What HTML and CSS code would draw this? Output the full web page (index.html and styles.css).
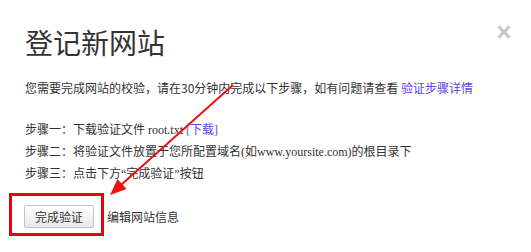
FILE: index.html
```html
<!DOCTYPE html>
<html lang="zh-CN">
<head>
<meta charset="utf-8">
<title>登记新网站</title>
<link rel="stylesheet" href="styles.css">
</head>
<body>
<div class="dialog">
  <h1 class="title">登记新网站</h1>
  <span class="close" aria-label="关闭">
    <svg width="14" height="14" viewBox="0 0 14 14"><path d="M1.5 1.5 L12.5 12.5 M12.5 1.5 L1.5 12.5" stroke="#c6c6c6" stroke-width="3" fill="none"/></svg>
  </span>
  <p class="intro">您需要完成网站的校验，请在30分钟内完成以下步骤，如有问题请查看 <a class="link" href="#">验证步骤详情</a></p>
  <ul class="steps">
    <li>步骤一：下载验证文件 root.txt <a class="link" href="#">[下载]</a></li>
    <li>步骤二：将验证文件放置于您所配置域名(如www.yoursite.com)的根目录下</li>
    <li>步骤三：点击下方“完成验证”按钮</li>
  </ul>
  <div class="actions">
    <button class="btn">完成验证</button>
    <a class="edit" href="#">编辑网站信息</a>
  </div>
  <div class="highlight"></div>
  <svg class="arrow" width="531" height="252" viewBox="0 0 531 252">
    <line x1="233" y1="85" x2="121" y2="185" stroke="#ee1111" stroke-width="2"/>
    <polygon points="110,195 126.5,189 117.5,179" fill="#ee1111"/>
  </svg>
</div>
</body>
</html>
```
FILE: styles.css
```css
html, body {
  margin: 0;
  padding: 0;
  background: #fff;
}
body {
  font-family: "Noto Sans CJK SC", "Noto Sans", sans-serif;
  color: #333;
}
.dialog {
  position: relative;
  width: 531px;
  height: 252px;
  box-sizing: border-box;
  padding: 22px 25px 0;
}
.title {
  margin: 0;
  font-size: 28px;
  font-weight: normal;
  line-height: 40px;
  color: #333;
}
.close {
  position: absolute;
  top: 25px;
  right: 20px;
  width: 14px;
  height: 14px;
  display: block;
}
.close svg {
  display: block;
}
.intro {
  margin: 16px 0 0;
  font-size: 12px;
  line-height: 20px;
  color: #333;
  white-space: nowrap;
}
.link {
  color: #6441ee;
  text-decoration: none;
}
.steps {
  list-style: none;
  margin: 21px 0 0;
  padding: 0;
  font-family: "Liberation Serif", "Noto Sans CJK SC", serif;
  font-size: 12px;
  line-height: 22px;
  color: #333;
}
.steps li {
  white-space: nowrap;
}
.actions {
  display: flex;
  align-items: center;
  gap: 13px;
  margin-top: 20px;
  margin-left: -1px;
}
.btn {
  width: 70px;
  height: 23px;
  padding: 0;
  font-family: "Noto Sans CJK SC", sans-serif;
  font-size: 12px;
  line-height: 21px;
  color: #333;
  background: linear-gradient(#ffffff, #e8e8e8);
  border: 1px solid #c4c4c4;
  border-radius: 2px;
}
.edit {
  font-size: 12px;
  color: #333;
  text-decoration: none;
}
.highlight {
  position: absolute;
  left: 9px;
  top: 193px;
  width: 95px;
  height: 43px;
  box-sizing: border-box;
  border: 3px solid #e8000b;
}
.arrow {
  position: absolute;
  left: 0;
  top: 0;
  pointer-events: none;
}
```
